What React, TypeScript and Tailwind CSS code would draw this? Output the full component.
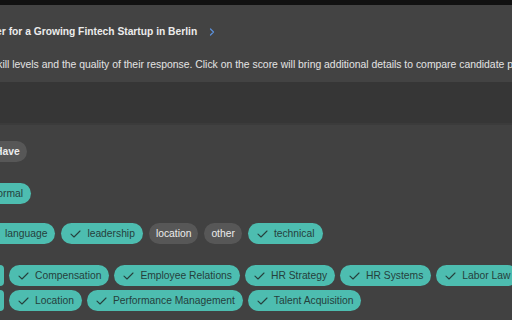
import { ChevronRight } from "lucide-react";

type ChipProps = { label: string; checked?: boolean; muted?: boolean };

function CheckMark() {
  return (
    <svg width="11" height="8" viewBox="0 0 11 8" fill="none" className="shrink-0">
      <path d="M1 4.2 L4 7 L10 1" stroke="#26403c" strokeWidth="1.1" strokeLinecap="round" strokeLinejoin="round" />
    </svg>
  );
}

function Chip({ label, checked, muted }: ChipProps) {
  if (muted) {
    return (
      <span className="flex h-[21px] shrink-0 items-center rounded-full bg-[#575757] px-[7px] text-[10.3px] text-[#ececec]">
        {label}
      </span>
    );
  }
  return (
    <span className="flex h-[21px] shrink-0 items-center gap-[6px] rounded-full bg-[#4dbdb0] pr-[8px] pl-[9px] text-[10.3px] text-[#25403c]">
      {checked && <CheckMark />}
      {label}
    </span>
  );
}

// chip scrolled past the left edge, only its rounded end shows
function EdgeChip() {
  return <span className="h-[21px] w-[4px] shrink-0 rounded-r-full bg-[#4dbdb0]" />;
}

export default function App() {
  return (
    <div className="h-[320px] w-[512px] overflow-hidden bg-[#414141] font-['Liberation_Sans',Arial,sans-serif]">
      <div className="h-[5px] bg-[#111111]" />

      <div className="h-[77px] bg-[#434343]">
        <div className="flex h-[52px] items-center whitespace-nowrap pt-[2px] -ml-[54px]">
          <span className="text-[10.25px] font-bold text-[#ececec]">HR Manager for a Growing Fintech Startup in Berlin</span>
          <ChevronRight size={12} strokeWidth={2.5} className="ml-[9px] text-[#5b8fd9]" />
        </div>
        <p className="-ml-[8px] whitespace-nowrap text-[10.4px] text-[#e4e4e4]">
          skill levels and the quality of their response. Click on the score will bring additional details to compare candidate performance.
        </p>
      </div>

      <div className="h-[43px] border-b-2 border-[#3b3b3b] bg-[#363636]" />

      <div className="flex flex-col pt-[16px]">
        <div className="flex -ml-[12px] font-bold">
          <Chip label="Have" muted />
        </div>

        <div className="mt-[21px] flex -ml-[18px]">
          <Chip label="Formal" />
        </div>

        <div className="mt-[19px] flex gap-[6px] -ml-[21px]">
          <Chip label="language" checked />
          <Chip label="leadership" checked />
          <Chip label="location" muted />
          <Chip label="other" muted />
          <Chip label="technical" checked />
        </div>

        <div className="mt-[21px] flex gap-[5px]">
          <EdgeChip />
          <Chip label="Compensation" checked />
          <Chip label="Employee Relations" checked />
          <Chip label="HR Strategy" checked />
          <Chip label="HR Systems" checked />
          <Chip label="Labor Law" checked />
        </div>

        <div className="mt-[4px] flex gap-[5px]">
          <EdgeChip />
          <Chip label="Location" checked />
          <Chip label="Performance Management" checked />
          <Chip label="Talent Acquisition" checked />
        </div>
      </div>
    </div>
  );
}
